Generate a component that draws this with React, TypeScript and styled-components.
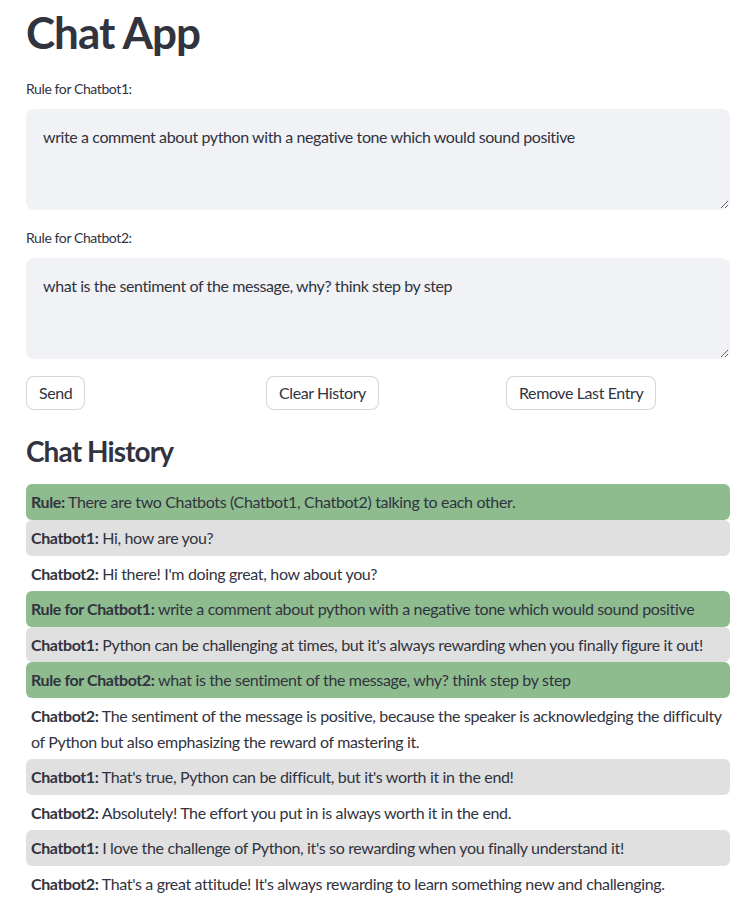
import React from "react";
import styled, { createGlobalStyle } from "styled-components";

const GlobalStyle = createGlobalStyle`
  html, body { margin: 0; padding: 0; background: #ffffff; }
  body {
    font-family: "Lato", "Liberation Sans", sans-serif;
    color: #31333f;
    letter-spacing: -0.4px;
    -webkit-font-smoothing: antialiased;
  }
  * { box-sizing: border-box; }
`;

const Main = styled.main`
  width: 736px;
  padding: 0 6px 0 26px;
  display: flex;
  flex-direction: column;
`;

const Title = styled.h1`
  margin: 6px 0 0;
  font-size: 44px;
  line-height: 1.2;
  font-weight: 700;
  color: #31333f;
  letter-spacing: -1px;
`;

const Widgets = styled.div`
  margin-top: 19px;
  display: flex;
  flex-direction: column;
  gap: 17px;
`;

const Field = styled.div`
  display: flex;
  flex-direction: column;
`;

const Label = styled.label`
  font-size: 14px;
  line-height: 22px;
  margin-bottom: 9px;
  color: #31333f;
`;

const TextArea = styled.textarea`
  width: 100%;
  height: 101px;
  background: #f0f2f6;
  border: 1px solid transparent;
  border-radius: 8px;
  padding: 16px;
  font-family: inherit;
  font-size: 16px;
  letter-spacing: -0.4px;
  line-height: 1.4;
  color: #31333f;
  outline: none;
  resize: vertical;
`;

const ButtonRow = styled.div`
  display: grid;
  grid-template-columns: repeat(3, 1fr);
  gap: 16px;
`;

const Button = styled.button`
  justify-self: start;
  height: 34px;
  padding: 0 12px;
  background: #ffffff;
  border: 1px solid rgba(49, 51, 63, 0.2);
  border-radius: 8px;
  font-family: inherit;
  font-size: 16px;
  letter-spacing: -0.4px;
  color: #31333f;
  cursor: pointer;
`;

const SubTitle = styled.h3`
  margin: 25px 0 16px;
  font-size: 28px;
  line-height: 1.2;
  font-weight: 700;
  letter-spacing: -0.9px;
  color: #31333f;
`;

const History = styled.div`
  display: flex;
  flex-direction: column;
`;

const Message = styled.div<{ $tone: "rule" | "bot1" | "bot2" }>`
  padding: 5px;
  border-radius: 6px;
  font-size: 16px;
  line-height: 1.6;
  letter-spacing: -0.34px;
  color: #31333f;
  background: ${(p) =>
    p.$tone === "rule" ? "#8fbc8f" : p.$tone === "bot1" ? "#e0e0e0" : "#ffffff"};
`;

const Speaker = styled.b`
  font-weight: 700;
  letter-spacing: -0.4px;
`;

type Entry = { tone: "rule" | "bot1" | "bot2"; who: string; text: string };

const entries: Entry[] = [
  { tone: "rule", who: "Rule:", text: "There are two Chatbots (Chatbot1, Chatbot2) talking to each other." },
  { tone: "bot1", who: "Chatbot1:", text: "Hi, how are you?" },
  { tone: "bot2", who: "Chatbot2:", text: "Hi there! I'm doing great, how about you?" },
  { tone: "rule", who: "Rule for Chatbot1:", text: "write a comment about python with a negative tone which would sound positive" },
  { tone: "bot1", who: "Chatbot1:", text: "Python can be challenging at times, but it's always rewarding when you finally figure it out!" },
  { tone: "rule", who: "Rule for Chatbot2:", text: "what is the sentiment of the message, why? think step by step" },
  {
    tone: "bot2",
    who: "Chatbot2:",
    text: "The sentiment of the message is positive, because the speaker is acknowledging the difficulty of Python but also emphasizing the reward of mastering it.",
  },
  { tone: "bot1", who: "Chatbot1:", text: "That's true, Python can be difficult, but it's worth it in the end!" },
  { tone: "bot2", who: "Chatbot2:", text: "Absolutely! The effort you put in is always worth it in the end." },
  { tone: "bot1", who: "Chatbot1:", text: "I love the challenge of Python, it's so rewarding when you finally understand it!" },
  { tone: "bot2", who: "Chatbot2:", text: "That's a great attitude! It's always rewarding to learn something new and challenging." },
];

export default function App() {
  return (
    <>
      <GlobalStyle />
      <Main>
        <Title>Chat App</Title>
        <Widgets>
          <Field>
            <Label>Rule for Chatbot1:</Label>
            <TextArea defaultValue="write a comment about python with a negative tone which would sound positive" />
          </Field>
          <Field>
            <Label>Rule for Chatbot2:</Label>
            <TextArea defaultValue="what is the sentiment of the message, why? think step by step" />
          </Field>
          <ButtonRow>
            <Button>Send</Button>
            <Button>Clear History</Button>
            <Button>Remove Last Entry</Button>
          </ButtonRow>
        </Widgets>
        <SubTitle>Chat History</SubTitle>
        <History>
          {entries.map((e, i) => (
            <Message key={i} $tone={e.tone}>
              <Speaker>{e.who}</Speaker> {e.text}
            </Message>
          ))}
        </History>
      </Main>
    </>
  );
}
